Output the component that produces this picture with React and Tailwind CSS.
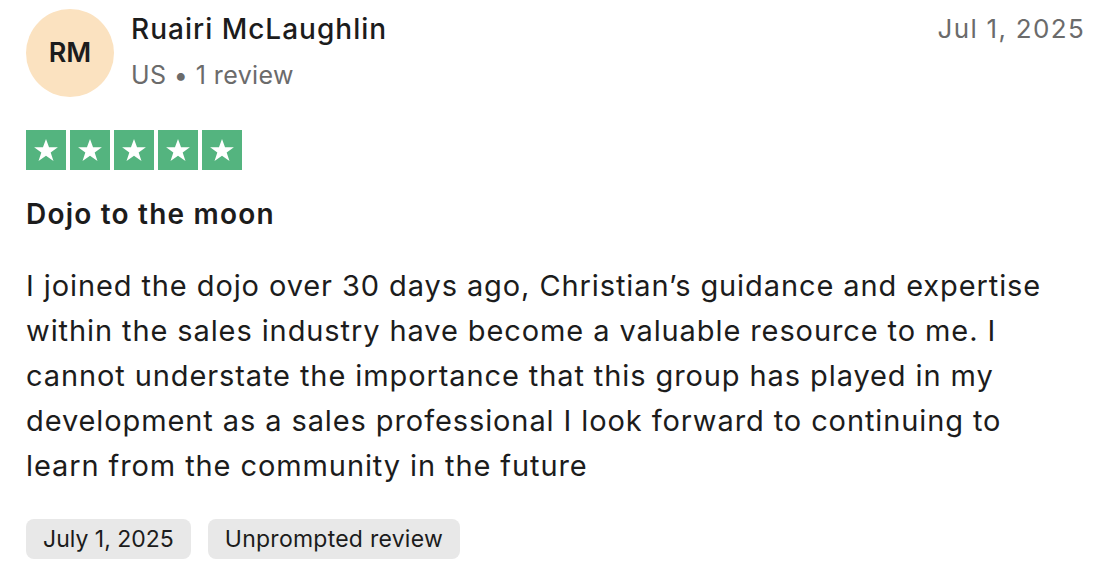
import React from 'react'

function Star() {
  return (
    <div className="w-10 h-10 bg-[#54b47f] flex items-center justify-center">
      <svg viewBox="0 0 24 24" className="w-7 h-7" fill="#ffffff">
        <path d="M12 2.5l2.6 7.2h7.6l-6.2 4.5 2.4 7.3L12 17l-6.4 4.5 2.4-7.3-6.2-4.5h7.6z" />
      </svg>
    </div>
  )
}

const lines = [
  'I joined the dojo over 30 days ago, Christian’s guidance and expertise',
  'within the sales industry have become a valuable resource to me. I',
  'cannot understate the importance that this group has played in my',
  'development as a sales professional I look forward to continuing to',
  'learn from the community in the future',
]

export default function App() {
  return (
    <div className="w-[1108px] h-[576px] bg-white text-[#1c1c1c] px-[26px] pt-[9px] font-['Inter',sans-serif]">
      <div className="flex items-start">
        <div className="w-[88px] h-[88px] rounded-full bg-[#fbe2c0] flex items-center justify-center text-[27px] font-semibold">
          RM
        </div>
        <div className="ml-[17px] flex-1">
          <div className="text-[28px] font-medium leading-[40px] tracking-[1px]">Ruairi McLaughlin</div>
          <div className="text-[25px] text-[#6b6b6b] leading-[34px] mt-[9px] tracking-[0.4px]">US • 1 review</div>
        </div>
        <div className="text-[26px] text-[#6b6b6b] leading-[40px] tracking-[1.3px] -mr-[3px]">Jul 1, 2025</div>
      </div>

      <div className="flex gap-1 mt-[33px]">
        <Star />
        <Star />
        <Star />
        <Star />
        <Star />
      </div>

      <div className="mt-[24px] text-[28px] font-semibold leading-[40px] tracking-[1.2px]">Dojo to the moon</div>

      <div className="mt-[29px] text-[29px] leading-[45px] tracking-[0.9px]">
        {lines.map((l) => (
          <div key={l}>{l}</div>
        ))}
      </div>

      <div className="flex gap-[17px] mt-[31px]">
        <div className="h-10 px-[17px] rounded-lg bg-[#e8e8e8] flex items-center text-[23px]">July 1, 2025</div>
        <div className="h-10 px-[17px] rounded-lg bg-[#e8e8e8] flex items-center text-[23px] tracking-[0.25px]">Unprompted review</div>
      </div>
    </div>
  )
}
